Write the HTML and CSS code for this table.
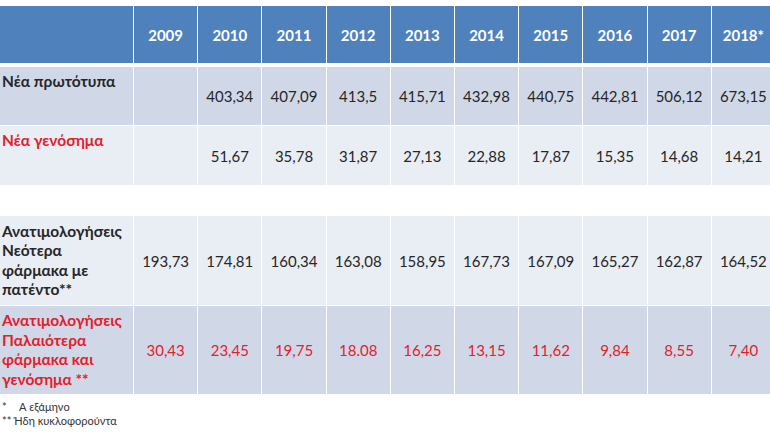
FILE: index.html
```
<!DOCTYPE html>
<html lang="el">
<head>
<meta charset="utf-8">
<link rel="stylesheet" href="styles.css">
</head>
<body>
<div class="page">
  <table class="data">
    <colgroup>
      <col class="c-label">
      <col class="c-year"><col class="c-year"><col class="c-year"><col class="c-year"><col class="c-year">
      <col class="c-year"><col class="c-year"><col class="c-year"><col class="c-year"><col class="c-year">
    </colgroup>
    <thead>
      <tr class="head">
        <th></th>
        <th>2009</th><th>2010</th><th>2011</th><th>2012</th><th>2013</th>
        <th>2014</th><th>2015</th><th>2016</th><th>2017</th><th>2018*</th>
      </tr>
    </thead>
    <tbody>
      <tr class="r1 dark">
        <td class="label top">Νέα πρωτότυπα</td>
        <td></td><td>403,34</td><td>407,09</td><td>413,5</td><td>415,71</td>
        <td>432,98</td><td>440,75</td><td>442,81</td><td>506,12</td><td>673,15</td>
      </tr>
      <tr class="r2 light">
        <td class="label top red">Νέα γενόσημα</td>
        <td></td><td>51,67</td><td>35,78</td><td>31,87</td><td>27,13</td>
        <td>22,88</td><td>17,87</td><td>15,35</td><td>14,68</td><td>14,21</td>
      </tr>
      <tr class="spacer"><td colspan="11"></td></tr>
      <tr class="r3 light">
        <td class="label">Ανατιμολογήσεις<br>Νεότερα<br>φάρμακα με<br>πατέντο**</td>
        <td>193,73</td><td>174,81</td><td>160,34</td><td>163,08</td><td>158,95</td>
        <td>167,73</td><td>167,09</td><td>165,27</td><td>162,87</td><td>164,52</td>
      </tr>
      <tr class="r4 dark red">
        <td class="label">Ανατιμολογήσεις<br>Παλαιότερα<br>φάρμακα και<br>γενόσημα **</td>
        <td>30,43</td><td>23,45</td><td>19,75</td><td>18.08</td><td>16,25</td>
        <td>13,15</td><td>11,62</td><td>9,84</td><td>8,55</td><td>7,40</td>
      </tr>
    </tbody>
  </table>
  <div class="notes">
    <p class="note"><span class="mark">*</span>Α εξάμηνο</p>
    <p class="note"><span class="mark2">**</span> Ήδη κυκλοφορούντα</p>
  </div>
</div>
</body>
</html>
```
FILE: styles.css
```
html, body {
  margin: 0;
  padding: 0;
  background: #ffffff;
  overflow: hidden;
}
body {
  width: 770px;
  height: 433px;
  font-family: "Lato", "Open Sans", sans-serif;
  color: #262626;
}
.page {
  padding-top: 6px;
  width: 780px;
}
.data {
  border-collapse: separate;
  border-spacing: 0;
  table-layout: fixed;
  width: 775px;
  font-size: 15px;
}
.c-label { width: 133px; }
.c-year { width: 64.2px; }
.data th, .data td {
  padding: 0;
  text-align: center;
  vertical-align: middle;
  border-bottom: 1px solid #ffffff;
}
.data th + th, .data td + td {
  border-left: 1px solid #ffffff;
}
.head th {
  background: #4f81bd;
  color: #ffffff;
  font-weight: 700;
  border-bottom: 4px solid #ffffff;
}
.head { height: 61px; }
.r1 { height: 59px; }
.r2 { height: 60px; }
.spacer { height: 30px; }
.r3 { height: 90px; }
.r4 { height: 88px; }
.dark td { background: #d0d8e8; }
.light td { background: #e9edf4; }
.spacer td {
  background: #ffffff;
  border: 0;
}
.r4 td { border-bottom: 0; }
.data td.label {
  text-align: left;
  font-weight: 700;
  font-size: 15.5px;
  padding-left: 2px;
  line-height: 19.5px;
}
.data td.top {
  vertical-align: top;
  padding-top: 5px;
}
.red { color: #e3202c; }
.notes {
  padding: 6px 0 0 2px;
  font-size: 11px;
  line-height: 13.5px;
  color: #333333;
}
.note { margin: 0; }
.mark { display: inline-block; width: 17px; }
.mark2 { margin-right: 0; }
```
